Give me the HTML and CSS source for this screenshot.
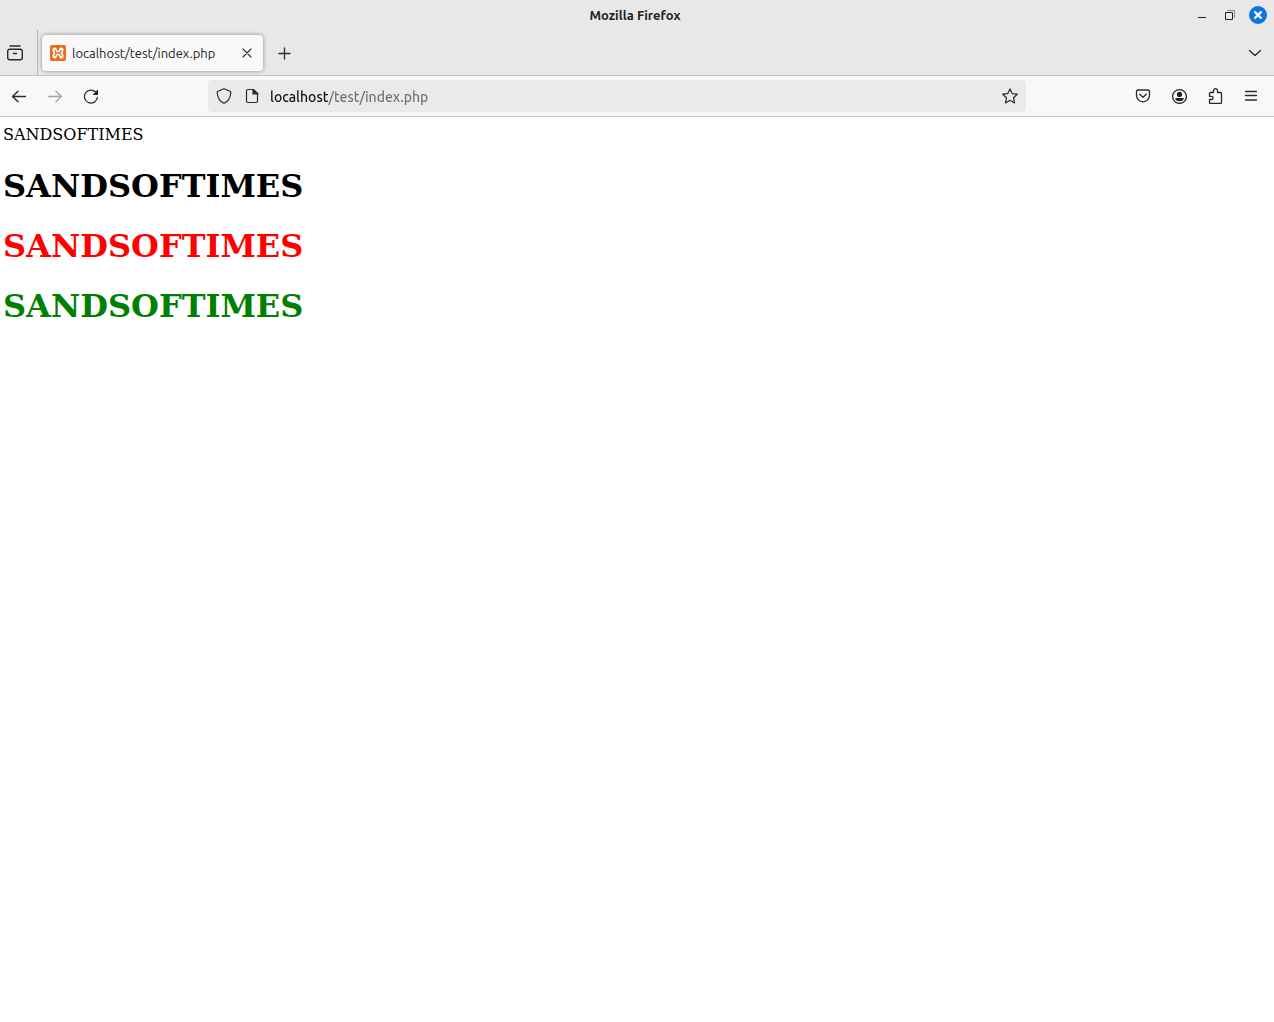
FILE: index.html
```html
<!DOCTYPE html>
<html lang="en">
<head>
<meta charset="utf-8">
<meta name="viewport" content="width=device-width, initial-scale=1">
<title>Mozilla Firefox</title>
<link rel="stylesheet" href="styles.css">
</head>
<body>
<header class="titlebar">
  <span class="window-title">Mozilla Firefox</span>
  <div class="window-controls">
    <button class="window-button" aria-label="Minimize"><svg class="icon-window" viewBox="0 0 18 18"><path d="M5 11.500h8" stroke="#222"/></svg></button>
    <button class="window-button" aria-label="Restore"><svg class="icon-window" viewBox="0 0 18 18"><path d="M4.500 6.500h7v7h-7z" stroke="#222"/><path d="M6 4.500h7.500v7.500" stroke="#888"/></svg></button>
    <button class="window-button" aria-label="Close"><svg class="icon-window" viewBox="0 0 18 18"><circle cx="9" cy="9" r="9" fill="#0c75de"/><path d="M5.500 5.500l7 7M12.500 5.500l-7 7" stroke="#fff" stroke-width="2.400"/></svg></button>
  </div>
</header>
<div class="tabbar">
  <button class="view-button" aria-label="Firefox View"><svg class="icon" viewBox="0 0 16 16"><path d="M3 1h10M2.700 4.200h10.600a2 2 0 0 1 2 2v6.600a2 2 0 0 1-2 2H2.700a2 2 0 0 1-2-2V6.200a2 2 0 0 1 2-2zM6.500 8.500h3" stroke-width="1.400"/></svg></button>
  <div class="tab">
    <svg class="icon" viewBox="0 0 16 16"><rect width="16" height="16" rx="2" fill="#e96f20" stroke="none"/><path d="M4.700 5l1.200 3-1.200 3M11.300 5l-1.200 3 1.200 3M6 8h4" stroke="#fff" stroke-width="4.600"/><path d="M4.900 5.200l1.100 2.800-1.100 2.800M11.100 5.200L10 8l1.100 2.800M6 8h4" stroke="#e96f20" stroke-width="1.300"/></svg>
    <span class="tab-label">localhost/test/index.php</span>
    <button class="tab-close" aria-label="Close tab"><svg class="icon" viewBox="0 0 16 16"><path d="M4 4l8 8M12 4l-8 8" stroke-width="1.100"/></svg></button>
  </div>
  <button class="tool-button new-tab" aria-label="New tab"><svg class="icon" viewBox="0 0 16 16"><path d="M8.500 3v11M3 8.500h11" stroke-width="1.300"/></svg></button>
  <button class="tool-button list-tabs" aria-label="List all tabs"><svg class="icon" viewBox="0 0 16 16"><path d="M2.500 5.500L8 10.500l5.500-5" stroke-width="1.300"/></svg></button>
</div>
<nav class="navbar" aria-label="Navigation">
  <button class="tool-button" aria-label="Back"><svg class="icon" viewBox="0 0 16 16"><path d="M14.500 8.500H1.500M7 3.200L1.500 8.500 7 13.800" stroke-width="1.300"/></svg></button>
  <button class="tool-button" aria-label="Forward" disabled><svg class="icon" viewBox="0 0 16 16"><path d="M1.500 8.500h13M9 3.200l5.500 5.300L9 13.800" stroke-width="1.300"/></svg></button>
  <button class="tool-button" aria-label="Reload"><svg class="icon" viewBox="0 0 16 16"><path d="M14.400 9.500A6.500 6.500 0 1 1 12.600 4L14 5.500" stroke-width="1.300"/><path d="M15 1.500V7H9.500z" fill="#222" stroke="none"/></svg></button>
  <div class="urlbar">
    <svg class="icon" viewBox="0 0 16 16"><path d="M8 .7L14 3.200c.7.3.9.800.8 1.500-.3 4.400-1.900 8.400-6.800 10.600C3.100 13.100 1.500 9.100 1.200 4.700c-.1-.7.100-1.200.8-1.500z"/></svg>
    <svg class="icon" viewBox="0 0 16 16"><path d="M4 1.500h5.500l4 4v7.500a1.500 1.500 0 0 1-1.500 1.500H4A1.500 1.500 0 0 1 2.500 13V3A1.500 1.500 0 0 1 4 1.500z"/><path d="M9 1.500V6h5z" fill="#333"/></svg>
    <input class="address" type="text" value="localhost/test/index.php" aria-label="Address" spellcheck="false">
    <button class="bookmark" aria-label="Bookmark this page"><svg class="icon" viewBox="0 0 16 16"><path d="M8 .9l2.200 4.700 5.100.6-3.800 3.500 1 5.200L8 12.300l-4.500 2.600 1-5.200L.7 6.200l5.100-.6z"/></svg></button>
  </div>
  <button class="tool-button" aria-label="Save to Pocket"><svg class="icon" viewBox="0 0 16 16"><path d="M3 2h10a1.500 1.500 0 0 1 1.500 1.500v3.800a6.500 6.500 0 0 1-13 0V3.500A1.500 1.500 0 0 1 3 2zM4.700 6.300L8 9.300l3.300-3" stroke-width="1.300"/></svg></button>
  <button class="tool-button" aria-label="Account"><svg class="icon" viewBox="0 0 16 16"><circle cx="8.500" cy="8.500" r="6.900" stroke-width="1.300"/><circle cx="8.500" cy="6.400" r="2.600" fill="#222" stroke="none"/><path d="M4.200 10h8.600c0 2.200-2 3.300-4.300 3.300S4.200 12.200 4.200 10z" fill="#222" stroke="none"/></svg></button>
  <button class="tool-button" aria-label="Extensions"><svg class="icon" viewBox="0 0 16 16"><path d="M3.500 4.500h3V2.700a2 2 0 0 1 4 0v1.800h3a1 1 0 0 1 1 1v9a1 1 0 0 1-1 1h-10a1 1 0 0 1-1-1v-3h2a1.600 1.600 0 0 0 0-3.200h-2V5.500a1 1 0 0 1 1-1z" stroke-width="1.300"/></svg></button>
  <button class="tool-button" aria-label="Open application menu"><svg class="icon" viewBox="0 0 16 16"><path d="M2.500 3.500h11M2.500 7.500h11M2.500 12h11" stroke-width="1.300"/></svg></button>
</nav>
<main class="page">
  <p class="intro">SANDSOFTIMES</p>
  <h1 class="heading">SANDSOFTIMES</h1>
  <h1 class="heading heading-red">SANDSOFTIMES</h1>
  <h1 class="heading heading-green">SANDSOFTIMES</h1>
</main>
</body>
</html>
```
FILE: styles.css
```css
* { box-sizing: border-box; }

body {
  margin: 0;
  background: #fff;
  color: #222;
  font-family: "Ubuntu", "Noto Sans", sans-serif;
  font-size: 13px;
}

button {
  display: flex;
  align-items: center;
  justify-content: center;
  flex: none;
  padding: 0;
  border: 0;
  background: none;
}

.icon {
  flex: none;
  width: 16px;
  height: 16px;
  fill: none;
  stroke: #2a2a2a;
  stroke-width: 1.2;
  stroke-linejoin: round;
  stroke-linecap: round;
}

.icon-window {
  width: 18px;
  height: 18px;
  fill: none;
}

.titlebar {
  display: grid;
  grid-template-columns: 1fr auto 1fr;
  align-items: center;
  height: 30px;
  padding: 0 7px 0 3px;
  background: #e8e8e8;
}

.window-title {
  grid-column: 2;
  font-weight: 600;
}

.window-controls {
  display: flex;
  justify-content: flex-end;
  gap: 10px;
}

.tabbar {
  display: flex;
  align-items: center;
  height: 46px;
  padding-right: 1px;
  border-bottom: 1px solid #c5c5c5;
  background: #e8e8e8;
}

.view-button {
  width: 38px;
  height: 45px;
  padding-right: 7px;
  border-right: 1px solid #b5b5b5;
}

.tab {
  display: flex;
  align-items: center;
  gap: 6px;
  width: 221px;
  height: 36px;
  margin-left: 4px;
  padding: 0 8px;
  border-radius: 4px;
  background: #f9f9f9;
  box-shadow: 0 0 4px rgba(0, 0, 0, .4);
}

.tab-label {
  flex: 1;
  white-space: nowrap;
}

.tool-button {
  width: 36px;
  height: 36px;
}

.tool-button:disabled { opacity: .4; }

.new-tab { margin-left: 3px; }

.list-tabs { margin-left: auto; }

.navbar {
  display: flex;
  align-items: center;
  height: 41px;
  padding: 0 5px 0 1px;
  border-bottom: 1px solid #c5c5c5;
  background: #f8f8f8;
}

.urlbar {
  display: flex;
  align-items: center;
  flex: 1;
  gap: 12px;
  min-width: 0;
  height: 32px;
  margin: 0 99px;
  padding: 0 8px;
  border-radius: 4px;
  background: #eaeaea;
}

/* The host name is drawn darker than the path that follows it. */
.address {
  flex: 1;
  min-width: 0;
  height: 32px;
  margin-left: -2px;
  padding: 2px 0 0;
  border: 0;
  outline: 0;
  background: linear-gradient(to right, #111 58px, #707070 58px);
  background-clip: text;
  color: transparent;
  font: inherit;
  font-size: 14px;
  font-weight: 500;
}

.page {
  padding: 8px 3px;
  color: #000;
  font-family: "DejaVu Serif", serif;
}

.intro {
  margin: 0;
  font-size: 16px;
  line-height: 20px;
}

.heading {
  margin: 22px 0;
  font-size: 32px;
  line-height: 38px;
}

.heading-red { color: #f00; }

.heading-green { color: #008000; }
```
